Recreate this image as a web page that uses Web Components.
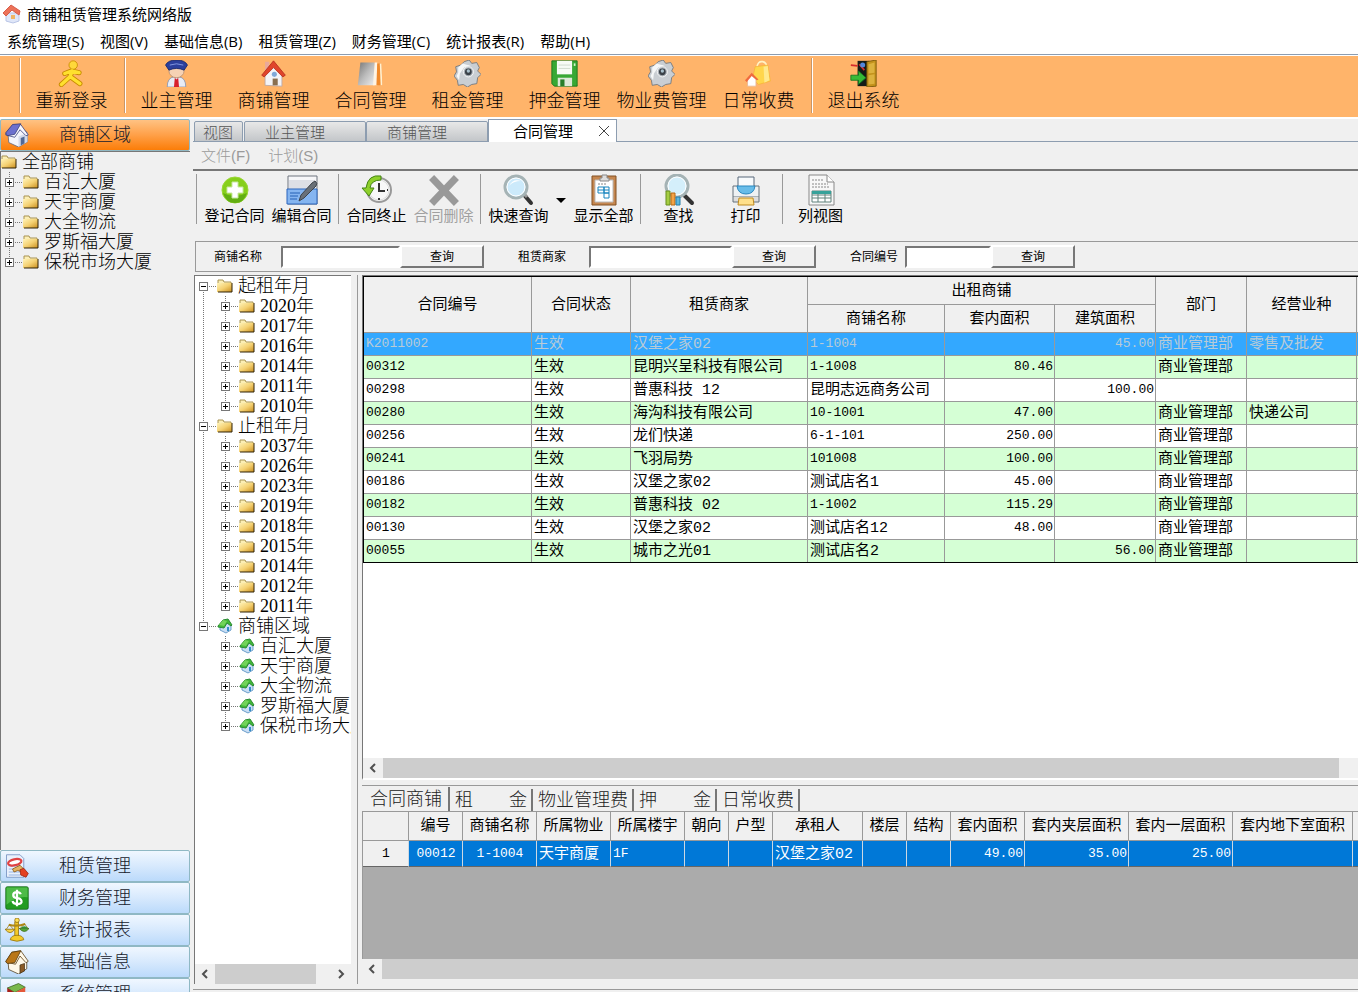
<!DOCTYPE html>
<html lang="zh-CN">
<head>
<meta charset="utf-8">
<title>商铺租赁管理系统网络版</title>
<style>
    :root {
        --face: #f0f0f0;
        --song: "Liberation Serif", "Noto Sans CJK SC", sans-serif;
        --ui: "Open Sans", "Noto Sans CJK SC", sans-serif;
        --mono: "Liberation Mono", "Noto Sans CJK SC", monospace;
    }

    body {
        margin: 0;
        height: 100vh;
        display: flex;
        flex-direction: column;
        overflow: hidden;
        background: var(--face);
        color: #000;
        font: 15px/20px var(--ui);
    }

    .body {
        flex: 1;
        min-height: 0;
        display: flex;
        gap: 3px;
        border-top: 2px solid #fff;
    }

    .work {
        flex: 1;
        min-width: 0;
        display: flex;
        flex-direction: column;
    }

    .split {
        flex: 1;
        min-height: 0;
        display: flex;
        margin-bottom: 2px;
        border-bottom: 1px solid #999;
    }

    .right {
        flex: 1;
        min-width: 0;
        display: flex;
        flex-direction: column;
    }
</style>
</head>
<body>
    <app-title-bar>商铺租赁管理系统网络版</app-title-bar>
    <app-menu-bar items="系统管理(S),视图(V),基础信息(B),租赁管理(Z),财务管理(C),统计报表(R),帮助(H)"></app-menu-bar>
    <app-main-toolbar></app-main-toolbar>
    <div class="body">
        <app-side-panel>
            <app-tree id="area-tree"></app-tree>
        </app-side-panel>
        <div class="work">
            <app-tab-strip></app-tab-strip>
            <app-menu-bar class="sub" items="文件(F),计划(S)"></app-menu-bar>
            <app-tool-strip></app-tool-strip>
            <app-search-bar></app-search-bar>
            <div class="split">
                <app-tree-pane>
                    <app-tree id="filter-tree"></app-tree>
                </app-tree-pane>
                <div class="right">
                    <app-contract-grid></app-contract-grid>
                    <app-detail-pane></app-detail-pane>
                </div>
            </div>
        </div>
    </div>

<script>
const ICONS = {
    house: `<svg viewBox="0 0 32 32"><path d="M6 15v15l20 1V14L16 6z" fill="#f4f4f8" stroke="#b9a9a9"/><path d="M6 2h5v8l-5 4z" fill="#e9a99c"/><path d="M2 18 16 1l14 17-3 2L16 9 5 20z" fill="#e0442c" stroke="#b5301c"/><circle cx="17" cy="17" r="3" fill="#7fa8d8"/><path d="M15 22h6v8h-6z" fill="#8a6f50"/></svg>`,
    logo: `<svg viewBox="0 0 20 20"><path d="M4 9v8l7 2 6-2V9z" fill="#dfe6f8" stroke="#b9c5e6"/><path d="M1 9 9 1l9 6-1 4-7-5-6 6z" fill="#ec7258" stroke="#d85d4a"/><path d="M9 11h4v4H9z" fill="#f0b565"/></svg>`,
    runner: `<svg viewBox="0 0 32 32"><g fill="none" stroke="#c88b00" stroke-width="6" stroke-linecap="round" stroke-linejoin="round"><path d="M17 13 14 20 4 29M15 20l11 8M8 16l8-3 9 2"/></g><circle cx="18" cy="6" r="5" fill="#ffd83a" stroke="#c88b00"/><g fill="none" stroke="#ffe02e" stroke-width="4" stroke-linecap="round" stroke-linejoin="round"><path d="M17 13 14 20 4 29M15 20l11 8M8 16l8-3 9 2"/></g></svg>`,
    owner: `<svg viewBox="0 0 32 32"><path d="M5 32q0-11 8-12h6q8 1 8 12z" fill="#e8ecf4" stroke="#8996b0"/><ellipse cx="16" cy="13" rx="9" ry="8" fill="#f6d2b4" stroke="#b98f70"/><path d="M3 6q3-6 13-6t13 6l-4 6q-9-4-18 0z" fill="#2b3f9c" stroke="#1a2866"/><path d="M8 6q8-3 16 0" stroke="#8fa4ea" fill="none"/><path d="m14 21 2 2 2-2 1 11h-6z" fill="#d8202c"/></svg>`,
    book: `<svg viewBox="0 0 32 32"><defs><linearGradient id="a" x2="1" y2="1"><stop stop-color="#777"/><stop offset=".5" stop-color="#bbb"/><stop offset="1" stop-color="#eee"/></linearGradient></defs><path d="M4 3h17v27H1z" fill="url(#a)"/><path d="M21 3h3v27h-5z" fill="#fff4e4"/><path d="M24 4h5l1 26h-7z" fill="#f08a2c"/><path d="M27 4h2l1 26h-2z" fill="#fff0d0"/></svg>`,
    gear: `<svg viewBox="0 0 32 32"><path d="m12 2 6-2 3 4 6-1 3 6-2 4 4 4-4 4-1 7-6 1-5 3-5-3-6 1-1-6-4-5 3-5-1-6 6-2z" fill="#c9ced3" stroke="#6d747b"/><path d="m10 4 6 2h4l-8 3-5 7-1 8-3-5 2-4v-6z" fill="#f5f7f8"/><circle cx="17" cy="14" r="6" fill="#aab1b8" stroke="#fff"/><circle cx="17" cy="14" r="4" fill="#3a4148"/><circle cx="17" cy="13" r="2" fill="#a9c0cc"/></svg>`,
    floppy: `<svg viewBox="0 0 32 32"><path d="M1 1h30v30H4l-3-3z" fill="#38a834" stroke="#167018"/><path d="M7 1h18v16H7z" fill="#f7fbf5"/><path d="M9 6h14M9 10h14" stroke="#cad7c8"/><path d="M8 21h17v10H8z" fill="#dce9d8"/><path d="M11 23h5v8h-5z" fill="#277e2a"/><path d="M27 4h2v3h-2z" fill="#d6f6cc"/></svg>`,
    bag: `<svg viewBox="0 0 32 32"><path d="M14 9q1-8 7-7 5 1 5 8" fill="none" stroke="#fff3c4" stroke-width="2"/><path d="m12 8 15-2 3 19-14 4-7-7z" fill="#ffd64c" stroke="#f7b63c"/><path d="m22 8 5-1 2 17-6 3z" fill="#ffe98e"/><path d="M3 23v8h10v-8l-5-5z" fill="#fff" stroke="#e9b593"/><path d="m0 24 8-9 8 8-2 1-6-5-6 7z" fill="#ef6b3f"/></svg>`,
    exit: `<svg viewBox="0 0 32 32"><path d="M9 1h14v30H9z" fill="#151b17"/><path d="m20 2 11-2v31l-11 1z" fill="#c4931c" stroke="#755507"/><path d="m22 5 7-2v12l-7 1zM22 18l7-1v11l-7 1z" fill="#ddb23e"/><path d="M1 18h9v-5l9 8-9 8v-5H1z" fill="#37ba38" stroke="#137520"/><path d="m1 6 8 1M11 5l6 7" stroke="#d52c2c" stroke-width="2"/><circle cx="15" cy="6" r="3" fill="#5387d9"/></svg>`,
    blueHouse: `<svg viewBox="0 0 32 32"><path d="m4 14 1 12 13 6 12-7V13l-9-7z" fill="#f4f4fb" stroke="#59617c"/><path d="m18 18 12-5v12l-12 7z" fill="#d2d8ea"/><path d="M1 14 10 3l11-1 10 14-3 1-8-8-7 10-12-3z" fill="#f8f8ff" stroke="#333875"/><path d="M1 13 10 2l11-1-8 14-10 2z" fill="#6d70cd" stroke="#333875"/><path d="m21 20 5-2v9l-5 3z" fill="#506895"/></svg>`,
    brownHouse: `<svg viewBox="0 0 32 32"><path d="m4 15 1 11 13 6 11-7V14l-9-7z" fill="#fff8e8" stroke="#4a3519"/><path d="M1 16 9 3l12-2 10 14-3 2-8-9-6 11-13-3z" fill="#fff8e8" stroke="#523509"/><path d="M1 15 9 3l12-2-8 16-10 1z" fill="#b97618" stroke="#523509"/><path d="m20 20 6-2v10l-6 3z" fill="#8b5a25" stroke="#4a3519"/></svg>`,
    stamp: `<svg viewBox="0 0 32 32"><path d="M2 1h18l5 5v25H2z" fill="#e9f1fc" stroke="#6a87b9"/><path d="M5 16h16M5 20h16M5 24h16M5 28h16" stroke="#7ca2de"/><ellipse cx="13" cy="11" rx="9" ry="4" fill="#fff" stroke="#e04242" stroke-width="3" transform="rotate(-12 13 11)"/><path d="m10 20 10-5 6 6-3 3-6-2-5 2z" fill="#e4b260" stroke="#84520e"/><path d="m20 21 5-2 6 7-3 5-7-3z" fill="#e34122" stroke="#9a200b"/></svg>`,
    money: `<svg viewBox="0 0 32 32"><rect x="1" y="1" width="30" height="30" rx="2" fill="#229c21" stroke="#126011"/><path d="M2 2h28v13Q15 13 2 25z" fill="#4dbb47"/><path d="M21 11q-1-3-5-3-5 0-5 4t5 4 6 4-6 4q-5 0-6-4M16 5v22" fill="none" stroke="#fff" stroke-width="3"/></svg>`,
    scales: `<svg viewBox="0 0 32 32"><path d="M13 5h5v21h-5z" fill="#f3ca28" stroke="#8b6909"/><circle cx="16" cy="3" r="3" fill="#ffe15a" stroke="#8b6909"/><path d="M5 9q11 3 22-1" fill="none" stroke="#b18914" stroke-width="3"/><path d="M6 9 1 16M6 9l6 7M26 8l-6 6M26 8l5 6" fill="none" stroke="#9c7810"/><path d="M0 15h13q-6 9-13 0z" fill="#f8d44a" stroke="#8b6909"/><path d="M19 14h13q-6 8-13 0z" fill="#54a638" stroke="#3f6a13"/><path d="M20 14q6-6 11 0z" fill="#329033"/><path d="M7 29q1-6 9-6t9 6q-9 4-18 0z" fill="#f3ca28" stroke="#8b6909"/></svg>`,
    books: `<svg viewBox="0 0 32 32"><path d="m3 8 15-6 9 5-14 7z" fill="#79b84b" stroke="#375d1c"/><path d="m3 8 10 6v7L3 15z" fill="#a62018"/><path d="m13 14 14-7v6l-14 8z" fill="#e4593a"/><path d="m3 15 10 6v10L3 25z" fill="#bd7120"/><path d="m13 21 14-8v10l-14 8z" fill="#e59b32"/></svg>`,
    folder: `<svg viewBox="0 0 16 16"><defs><linearGradient id="f" x2="1" y2="1"><stop stop-color="#fff3b8"/><stop offset=".5" stop-color="#f4d071"/><stop offset="1" stop-color="#c88c1c"/></linearGradient></defs><path d="M1 4V2h5l1 2h7v3H1z" fill="#fbeeb5" stroke="#a99352"/><path d="M0 5h15v9H0z" fill="url(#f)"/><path d="M15 5v9H1" fill="none" stroke="#2e2308"/></svg>`,
    greenHouse: `<svg viewBox="0 0 16 16"><path d="M3 8v4l6 3 5-3V7l-4-3z" fill="#c9def5" stroke="#6c9fcb"/><path d="M1 8 6 2l5-1 4 6-1 1-4-3-3 5-6-1z" fill="#42b837" stroke="#2b8a35"/><path d="m6 2 4 1-3 5-5-1z" fill="#73d35a"/><path d="M10 9h2v4h-2z" fill="#348dc6"/></svg>`,
    add: `<svg viewBox="0 0 32 32"><circle cx="16" cy="16" r="13" fill="#86cf1b" stroke="#9bd735"/><path d="M4 19q11 6 24 0-3 10-12 10T4 19" fill="#62ae13"/><path d="M13 8h6v5h5v6h-5v5h-6v-5H8v-6h5z" fill="#fff" stroke="#c7e7a0"/></svg>`,
    edit: `<svg viewBox="0 0 32 32"><path d="M2 2h29v28H2z" fill="#f6f6f8" stroke="#6e747f"/><path d="M3 6h26v9H3z" fill="#dddfe6"/><path d="M1 15h30v15H1z" fill="#85b5f0" stroke="#2a65bd"/><path d="M4 19h10M4 22h8M4 25h7" stroke="#2460b5"/><path d="M29 7q3 2 1 5L18 24l-5 3 2-6L26 9z" fill="#697078" stroke="#3e444b"/></svg>`,
    clock: `<svg viewBox="0 0 32 32"><circle cx="18" cy="16" r="12" fill="#f8f8f8" stroke="#999" stroke-width="2"/><circle cx="18" cy="16" r="10" fill="none" stroke="#ddd"/><path d="M18 9v8h6M18 24v2M9 16h1M26 16h1" stroke="#333" stroke-width="2" fill="none"/><path d="M20 2Q7 0 5 14H1l7 8 5-8H9q1-8 11-8z" fill="#8ed02b" stroke="#448414"/></svg>`,
    remove: `<svg viewBox="0 0 32 32"><path d="m6 6 20 21M26 6 6 27" stroke="#999" stroke-width="7" stroke-linecap="square"/></svg>`,
    find: `<svg viewBox="0 0 32 32"><path d="m22 22 6 7" stroke="#333" stroke-width="4" stroke-linecap="round"/><path d="m20 19 4 4" stroke="#999" stroke-width="3"/><circle cx="13" cy="13" r="11" fill="#cceafb" stroke="#a5b3b5" stroke-width="3"/><circle cx="13" cy="13" r="9" fill="none" stroke="#fff"/><path d="M6 12q4-8 12-5-8 0-12 5" fill="#fff"/></svg>`,
    clipboard: `<svg viewBox="0 0 32 32"><path d="M4 2h24v29H4z" fill="#c58750" stroke="#835022"/><path d="M7 6h18v22H7z" fill="#fff" stroke="#bbb"/><path d="M12 4h2V1h5v3h2v3h-9z" fill="#ddd" stroke="#888"/><path d="M10 10h8" stroke="#888" stroke-dasharray="2 1"/><path d="M10 13h11v6H10zM10 16h11M16 13v6h5v5h-5z" fill="none" stroke="#1684be"/></svg>`,
    chart: `<svg viewBox="0 0 32 32"><path d="m22 22 7 7" stroke="#333" stroke-width="4" stroke-linecap="round"/><circle cx="14" cy="12" r="11" fill="#d4effb" stroke="#a5b3b5" stroke-width="3"/><circle cx="14" cy="12" r="9" fill="none" stroke="#fff"/><path d="M3 17h4v14H3z" fill="#a5cc42" stroke="#668e1c"/><path d="M8 19h4v12H8z" fill="#f3a347" stroke="#b86814"/><path d="M13 23h4v8h-4z" fill="#5db7de" stroke="#257da8"/></svg>`,
    print: `<svg viewBox="0 0 32 32"><path d="M3 12h26v11H3z" fill="#eef1f3" stroke="#65717b"/><path d="M8 3h16v11H8z" fill="#f7fafc" stroke="#58697a"/><path d="M7 12h18q-1 8-9 8t-9-8" fill="#67bce9" stroke="#2987bf"/><path d="M3 23v5h26v-5" fill="#ddd" stroke="#65717b"/><path d="M9 24h14l1 7H8z" fill="#ffe08b" stroke="#be8a20"/></svg>`,
    sheet: `<svg viewBox="0 0 32 32"><path d="M4 1h18l7 7v23H4z" fill="#f7f7f7" stroke="#888"/><path d="M22 1v7h7" fill="#fff" stroke="#888"/><path d="M7 6h12M7 10h16M7 13h18" stroke="#888" stroke-dasharray="2 1"/><path d="M7 17h19v11H7zM7 21h19M7 24h19M13 17v11M20 17v11" fill="#fff" stroke="#61817a"/><path d="M7 17h19v3H7z" fill="#36a29a"/></svg>`,
    left: `<svg viewBox="0 0 20 20"><path d="m12 6-4 4 4 4" fill="none" stroke="#505050" stroke-width="2"/></svg>`,
    right: `<svg viewBox="0 0 20 20"><path d="m8 6 4 4-4 4" fill="none" stroke="#505050" stroke-width="2"/></svg>`
};

const RESET = `
    :host, * { box-sizing: border-box; }
    button {
        font: inherit;
        color: inherit;
        margin: 0;
        padding: 0;
        border: 0;
        background: none;
        white-space: nowrap;
    }
    svg { display: block; width: 100%; height: 100%; }
`;

class AppElement extends HTMLElement {
    constructor() {
        super();
        this.attachShadow({ mode: "open" });
    }

    connectedCallback() {
        this.render();
    }

    draw(css, html) {
        this.shadowRoot.innerHTML = `<style>${RESET}${css}</style>${html}`;
    }
}

class TitleBar extends AppElement {
    render() {
        this.draw(`
            :host { display: flex; align-items: center; gap: 5px; height: 28px; padding-left: 2px; background: #fff; }
            i { width: 20px; height: 20px; }
        `, `<i>${ICONS.logo}</i><slot></slot>`);
    }
}

class MenuBar extends AppElement {
    render() {
        const items = this.getAttribute("items").split(",");
        this.draw(`
            :host { display: block; background: #fff; border-bottom: 1px solid #8d9db0; }
            nav { display: flex; gap: 16px; height: 26px; align-items: center; padding-left: 7px; }
            :host(.sub) {
                background: var(--face); color: #9a9a9a; border-bottom: 2px solid #777;
                font-family: "Liberation Sans", "Noto Sans CJK SC", sans-serif; font-weight: 300;
            }
            :host(.sub) nav { gap: 18px; height: 27px; padding-left: 8px; }
        `, `<nav>${items.map(t => `<button>${t}</button>`).join("")}</nav>`);
    }
}

class MainToolbar extends AppElement {
    render() {
        const items = [
            ["runner", "重新登录"], null,
            ["owner", "业主管理"], ["house", "商铺管理"], ["book", "合同管理"], ["gear", "租金管理"],
            ["floppy", "押金管理"], ["gear", "物业费管理"], ["bag", "日常收费"], null,
            ["exit", "退出系统"]
        ];
        this.draw(`
            :host { display: flex; height: 62px; padding: 2px 0 4px 15px; background: #ffb46a; border-top: 1px solid #fff; font: 300 18px/22px var(--song); }
            hr { width: 2px; margin: 0 2px 0 4px; border: 0; border-left: 1px solid #c99566; background: #fff; }
            button { width: 97px; padding-top: 2px; display: flex; flex-direction: column; align-items: center; gap: 3px; }
            i { width: 27px; height: 27px; }
        `, "<hr>" + items.map(it => it
            ? `<button><i>${ICONS[it[0]]}</i>${it[1]}</button>`
            : "<hr>").join(""));
    }
}

class SidePanel extends AppElement {
    render() {
        const groups = [
            ["stamp", "租赁管理"], ["money", "财务管理"], ["scales", "统计报表"],
            ["brownHouse", "基础信息"], ["books", "系统管理"]
        ];
        const bar = ([icon, text], cls = "") => `<button class="bar ${cls}"><i>${ICONS[icon]}</i><span>${text}</span></button>`;
        this.draw(`
            :host { display: flex; flex-direction: column; width: 190px; flex: none; overflow: hidden; font: 300 18px/20px var(--song); }
            .bar {
                display: flex; align-items: center; flex: none; width: 100%; height: 32px; padding-left: 4px;
                border: 1px solid #8fb8c4; border-radius: 2px; color: #16202c;
                background: linear-gradient(#f0f7ff, #d7e9fd 50%, #bbdafb);
            }
            .active { background: linear-gradient(#ffc283, #ffa048 50%, #fb7d08); }
            .bar i { width: 24px; height: 24px; }
            .bar span { margin-left: 30px; }
            .tree { flex: 1; min-height: 0; overflow: hidden; border: solid #777; border-width: 1px 0 0 1px; }
            .groups { height: 142px; flex: none; overflow: hidden; display: flex; flex-direction: column; }
        `, `${bar(["blueHouse", "商铺区域"], "active")}
            <div class="tree"><slot></slot></div>
            <div class="groups">${groups.map(g => bar(g)).join("")}</div>`);
    }
}

class Tree extends AppElement {
    set nodes(list) {
        this.list = list;
        this.render();
    }

    // One 22px column of the tree: dotted guide lines and, when asked, the +/- box
    gutter(up, down, box) {
        const line = d => `<path d="${d}" stroke="#777" stroke-dasharray="1 1"/>`;
        let s = "";
        if (up) s += line("M8.5 0v10");
        if (down) s += line("M8.5 10v10");
        if (box) {
            s += line("M12 10.5h9");
            s += `<rect x="4.5" y="6.5" width="8" height="8" fill="#fff" stroke="#777"/><path d="M6 10.5h5${box === "+" ? "M8.5 8v5" : ""}" stroke="#000"/>`;
        }
        const svg = `<svg viewBox="0 0 22 20">${s}</svg>`;
        return box
            ? `<button class="g" aria-label="${box === "+" ? "展开" : "折叠"}">${svg}</button>`
            : `<span class="g">${svg}</span>`;
    }

    rows(list, depth, prefix) {
        return list.map((n, i) => {
            const last = i === list.length - 1;
            const root = n.root;
            const own = root ? "" : this.gutter(depth > 0 || i > 0, !last, n.children ? "-" : "+");
            const next = root ? "" : prefix + this.gutter(false, !last, "").replace("M8.5 10v10", "M8.5 0v20");
            return `<li>${prefix}${own}<i>${ICONS[n.icon]}</i><span>${n.text}</span></li>`
                + (n.children ? this.rows(n.children, depth + 1, next) : "");
        }).join("");
    }

    render() {
        if (!this.list) return;
        this.draw(`
            :host { display: block; font: 300 18px/20px var(--song); }
            ul { margin: 0; padding: 0; list-style: none; }
            li { display: flex; align-items: center; height: 20px; white-space: nowrap; }
            .g { width: 22px; height: 20px; flex: none; }
            i { width: 16px; height: 16px; flex: none; margin-right: 5px; }
        `, `<ul>${this.rows(this.list, 0, "")}</ul>`);
    }
}

class TabStrip extends AppElement {
    render() {
        this.draw(`
            :host { display: flex; align-items: flex-end; height: 23px; padding-left: 1px; box-shadow: inset 0 -1px #8d9db0; }
            button.tab {
                height: 21px; padding: 0 40px 0 20px; color: #555;
                border: 1px solid #8d9db0; border-radius: 2px 2px 0 0;
                background: linear-gradient(#e8e8e8, #c3c6c9);
                font-weight: 300; line-height: 18px;
            }
            button.first { padding: 0 9px 0 8px; margin-right: 1px; }
            .on { display: flex; align-items: center; height: 23px; background: #fff; border: 1px solid #8d9db0; border-bottom: 0; padding: 0 5px 0 24px; gap: 24px; }
            .on i { display: block; width: 14px; height: 14px; }
        `, `<button class="tab first">视图</button><button class="tab">业主管理</button><button class="tab">商铺管理</button>
            <div class="on"><button>合同管理</button><button aria-label="关闭"><i><svg viewBox="0 0 14 14"><path d="m2 2 10 10M12 2 2 12" stroke="#444"/></svg></i></button></div>`);
    }
}

class ToolStrip extends AppElement {
    render() {
        const items = [
            null, ["add", "登记合同"], ["edit", "编辑合同"],
            null, ["clock", "合同终止"], ["remove", "合同删除", "off"],
            null, ["find", "快速查询"], "drop", ["clipboard", "显示全部"],
            null, ["chart", "查找"], ["print", "打印"],
            null, ["sheet", "列视图"]
        ];
        this.draw(`
            :host { display: flex; height: 70px; padding-top: 3px; line-height: 18px; }
            hr { width: 8px; height: 50px; margin: 0; border: 0; background: linear-gradient(#999, #999) 3px 0 / 1px 100% no-repeat; }
            button { width: 67px; height: 52px; display: flex; flex-direction: column; align-items: center; }
            i { width: 32px; height: 32px; }
            .off { color: #a0a0a0; }
            .drop { width: 18px; justify-content: center; }
            .drop::before { content: ""; border: 5px solid transparent; border-top-color: #000; border-bottom: 0; }
        `, items.map(it => {
            if (!it) return "<hr>";
            if (it === "drop") return `<button class="drop" aria-label="更多"></button>`;
            return `<button class="${it[2] || ""}"${it[2] ? " disabled" : ""}><i>${ICONS[it[0]]}</i>${it[1]}</button>`;
        }).join(""));
    }
}

class SearchBar extends AppElement {
    render() {
        const fields = [["商铺名称", 67, 119], ["租赁商家", 71, 143], ["合同编号", 55, 86]];
        this.draw(`
            :host { display: flex; align-items: center; gap: 34px; height: 31px; margin: 0 0 3px 2px; padding-left: 18px; border: solid #999; border-width: 1px 0 1px 1px; font-size: 12px; }
            div { display: flex; align-items: center; }
            input { height: 22px; padding: 0 3px; border: 2px solid; border-color: #777 #fff #fff #777; background: #fff; font: inherit; }
            button { width: 84px; height: 23px; border: 2px solid; border-color: #fff #777 #777 #fff; background: var(--face); }
        `, fields.map(([text, lw, iw], i) => `
            <div><label for="q${i}" style="width:${lw}px">${text}</label><input id="q${i}" style="width:${iw}px"><button>查询</button></div>`).join(""));
    }
}

class ScrollBar extends AppElement {
    render() {
        this.draw(`
            :host { display: flex; height: 20px; flex: none; background: var(--face); }
            button { width: 20px; flex: none; }
            .track { flex: 1; display: flex; }
            .thumb { background: #cdcdcd; }
        `, `<button aria-label="向左">${ICONS.left}</button>
            <div class="track"><div class="thumb" style="width:${this.getAttribute("size")}"></div></div>
            ${this.hasAttribute("end") ? `<button aria-label="向右">${ICONS.right}</button>` : ""}`);
    }
}

class TreePane extends AppElement {
    render() {
        this.draw(`
            :host { display: flex; width: 169px; flex: none; padding: 0 4px 5px 1px; }
            .box { flex: 1; min-width: 0; display: flex; flex-direction: column; background: #fff; border: solid #777; border-width: 1px 0 0 1px; }
            .view { flex: 1; overflow: hidden; }
            .bar { width: 7px; border-right: 1px solid #999; }
        `, `<div class="box"><div class="view"><slot></slot></div><app-scroll-bar size="87%" end></app-scroll-bar></div><div class="bar"></div>`);
    }
}

// Cells with no Chinese text use the narrower fixed-width figures
function cell(text, cls = "") {
    const num = /^[\w.\-]+$/.test(text) ? " num" : "";
    return `<td class="${cls}${num}">${text}</td>`;
}

const TABLE = `
    table { border-collapse: separate; border-spacing: 0; table-layout: fixed; }
    th { font-weight: 400; background: var(--face); border: solid #999; border-width: 0 1px 1px 0; padding: 2px 0 0; white-space: nowrap; }
    td { padding: 2px 1px 0 2px; white-space: nowrap; overflow: hidden; line-height: 18px; }
    .num { padding-top: 0; font-size: 13px; }
    .r { text-align: right; }
    .c { text-align: center; }
`;

class ContractGrid extends AppElement {
    render() {
        const widths = [168, 99, 177, 137, 110, 101, 91, 110, 60];
        const rows = [
            ["K2011002", "汉堡之家02", "1-1004", "", "45.00", "商业管理部", "零售及批发"],
            ["00312", "昆明兴呈科技有限公司", "1-1008", "80.46", "", "商业管理部", ""],
            ["00298", "普惠科技 12", "昆明志远商务公司", "", "100.00", "", ""],
            ["00280", "海沟科技有限公司", "10-1001", "47.00", "", "商业管理部", "快递公司"],
            ["00256", "龙们快递", "6-1-101", "250.00", "", "商业管理部", ""],
            ["00241", "飞羽局势", "101008", "100.00", "", "商业管理部", ""],
            ["00186", "汉堡之家02", "测试店名1", "45.00", "", "商业管理部", ""],
            ["00182", "普惠科技 02", "1-1002", "115.29", "", "商业管理部", ""],
            ["00130", "汉堡之家02", "测试店名12", "48.00", "", "商业管理部", ""],
            ["00055", "城市之光01", "测试店名2", "", "56.00", "商业管理部", ""]
        ];
        this.draw(`${TABLE}
            :host { flex: 1; min-height: 0; display: flex; flex-direction: column; background: #fff; border: solid #777; border-width: 1px 0 0 1px; border-bottom: 2px solid #fff; font-family: var(--mono); }
            .view { flex: 1; overflow: hidden; }
            table { width: ${widths.reduce((a, b) => a + b)}px; border: solid #000; border-width: 1px 0 1px 1px; }
            th { height: 28px; }
            td { height: 23px; border: solid #999; border-width: 0 1px 1px 0; }
            tr:nth-child(even) td { background: #d5ffd5; }
            tr:last-child td { border-bottom: 0; height: 22px; }
            tbody tr:first-child td { background: #33a8ff; color: #b9cbd6; }
        `, `<div class="view"><table>
            <colgroup>${widths.map(w => `<col style="width:${w}px">`).join("")}</colgroup>
            <thead>
                <tr><th rowspan="2">合同编号</th><th rowspan="2">合同状态</th><th rowspan="2">租赁商家</th><th colspan="3">出租商铺</th><th rowspan="2">部门</th><th rowspan="2">经营业种</th><th rowspan="2"></th></tr>
                <tr><th>商铺名称</th><th>套内面积</th><th>建筑面积</th></tr>
            </thead>
            <tbody>${rows.map(([no, shopper, shop, inner, gross, dept, kind]) => `<tr>${cell(no)}${cell("生效")}${cell(shopper)}${cell(shop)}${cell(inner, "r")}${cell(gross, "r")}${cell(dept)}${cell(kind)}<td></td></tr>`).join("")}</tbody>
        </table></div><app-scroll-bar size="98%"></app-scroll-bar>`);
    }
}

class DetailPane extends AppElement {
    render() {
        const tabs = ["合同商铺", "租　　金", "物业管理费", "押　　金", "日常收费"];
        const cols = [
            ["", 46], ["编号", 54], ["商铺名称", 74], ["所属物业", 74], ["所属楼宇", 74], ["朝向", 44], ["户型", 44],
            ["承租人", 90], ["楼层", 44], ["结构", 44], ["套内面积", 74], ["套内夹层面积", 104], ["套内一层面积", 104],
            ["套内地下室面积", 120], ["", 60]
        ];
        this.draw(`${TABLE}
            :host { flex: none; display: flex; flex-direction: column; height: 209px; padding: 5px 0 10px; font-family: var(--mono); }
            .tabs { display: flex; align-items: flex-end; height: 26px; border-top: 1px solid #999; font: 300 18px/20px var(--song); }
            .tabs button { height: 22px; padding: 0 4px 0 5px; border-right: 2px solid #777; color: #222; }
            .tabs .on { padding: 0 6px 0 8px; height: 24px; }
            .view { flex: 1; overflow: hidden; background: #ababab; border: solid #999; border-width: 1px 0 0 1px; }
            table { width: ${cols.reduce((a, c) => a + c[1], 0)}px; }
            th { height: 29px; }
            td { height: 26px; border: solid #cdd8e2; border-width: 0 1px 1px 0; border-bottom-color: #666; background: #0078d7; color: #fff; }
            td:first-child { background: var(--face); color: #000; }
        `, `<div class="tabs">${tabs.map((t, i) => `<button${i ? "" : ` class="on"`}>${t}</button>`).join("")}</div>
            <div class="view"><table>
                <colgroup>${cols.map(c => `<col style="width:${c[1]}px">`).join("")}</colgroup>
                <thead><tr>${cols.map(c => `<th>${c[0]}</th>`).join("")}</tr></thead>
                <tbody><tr>${cell("1", "c")}${cell("00012", "c")}${cell("1-1004", "c")}${cell("天宇商厦")}${cell("1F")}<td></td><td></td>${cell("汉堡之家02")}<td></td><td></td>${cell("49.00", "r")}${cell("35.00", "r")}${cell("25.00", "r")}<td></td><td></td></tr></tbody>
            </table></div>
            <app-scroll-bar size="100%"></app-scroll-bar>`);
    }
}

customElements.define("app-title-bar", TitleBar);
customElements.define("app-menu-bar", MenuBar);
customElements.define("app-main-toolbar", MainToolbar);
customElements.define("app-side-panel", SidePanel);
customElements.define("app-tree", Tree);
customElements.define("app-tab-strip", TabStrip);
customElements.define("app-tool-strip", ToolStrip);
customElements.define("app-search-bar", SearchBar);
customElements.define("app-scroll-bar", ScrollBar);
customElements.define("app-tree-pane", TreePane);
customElements.define("app-contract-grid", ContractGrid);
customElements.define("app-detail-pane", DetailPane);

const areas = ["百汇大厦", "天宇商厦", "大全物流", "罗斯福大厦", "保税市场大厦"];
const leaves = (texts, icon) => texts.map(text => ({ text, icon }));
const years = list => leaves(list.map(y => y + "年"), "folder");

document.getElementById("area-tree").nodes = [
    { text: "全部商铺", icon: "folder", root: true, children: leaves(areas, "folder") }
];
// The pane is too narrow for the last name, so it stops at the pane's edge
document.getElementById("filter-tree").nodes = [
    { text: "起租年月", icon: "folder", children: years([2020, 2017, 2016, 2014, 2011, 2010]) },
    { text: "止租年月", icon: "folder", children: years([2037, 2026, 2023, 2019, 2018, 2015, 2014, 2012, 2011]) },
    { text: "商铺区域", icon: "greenHouse", children: leaves(areas, "greenHouse") }
];
</script>
</body>
</html>
